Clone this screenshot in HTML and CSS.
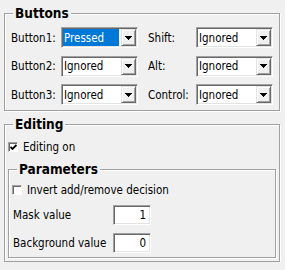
FILE: index.html
```html
<!DOCTYPE html>
<html lang="en">
<head>
    <meta charset="UTF-8">
    <title>Mouse Settings</title>
    <link rel="stylesheet" href="styles.css">
</head>
<body>
    <fieldset class="group">
        <legend>Buttons</legend>
        <div class="button-grid">
            <span class="label">Button1:</span>
            <div class="combo pressed"><span class="combo-text">Pressed</span><span class="combo-btn"><svg width="7" height="4" viewBox="0 0 7 4"><polygon points="0,0 7,0 3.5,4" shape-rendering="crispEdges"/></svg></span></div>
            <span class="label label-right">Shift:</span>
            <div class="combo"><span class="combo-text">Ignored</span><span class="combo-btn"><svg width="7" height="4" viewBox="0 0 7 4"><polygon points="0,0 7,0 3.5,4" shape-rendering="crispEdges"/></svg></span></div>

            <span class="label">Button2:</span>
            <div class="combo"><span class="combo-text">Ignored</span><span class="combo-btn"><svg width="7" height="4" viewBox="0 0 7 4"><polygon points="0,0 7,0 3.5,4" shape-rendering="crispEdges"/></svg></span></div>
            <span class="label label-right">Alt:</span>
            <div class="combo"><span class="combo-text">Ignored</span><span class="combo-btn"><svg width="7" height="4" viewBox="0 0 7 4"><polygon points="0,0 7,0 3.5,4" shape-rendering="crispEdges"/></svg></span></div>

            <span class="label">Button3:</span>
            <div class="combo"><span class="combo-text">Ignored</span><span class="combo-btn"><svg width="7" height="4" viewBox="0 0 7 4"><polygon points="0,0 7,0 3.5,4" shape-rendering="crispEdges"/></svg></span></div>
            <span class="label label-right">Control:</span>
            <div class="combo"><span class="combo-text">Ignored</span><span class="combo-btn"><svg width="7" height="4" viewBox="0 0 7 4"><polygon points="0,0 7,0 3.5,4" shape-rendering="crispEdges"/></svg></span></div>
        </div>
    </fieldset>

    <fieldset class="group editing">
        <legend>Editing</legend>
        <div class="check-row editing-row">
            <span class="checkbox checked"><svg width="7" height="7" viewBox="0 0 7 7"><polyline points="0.5,3 2.5,5 6.5,1" fill="none" stroke="#000" stroke-width="1.8"/></svg></span>
            <span>Editing on</span>
        </div>

        <fieldset class="group params">
            <legend>Parameters</legend>
            <div class="check-row invert-row">
                <span class="checkbox"></span>
                <span>Invert add/remove decision</span>
            </div>
            <div class="value-grid">
                <span class="label">Mask value</span>
                <div class="field">1</div>
                <span class="label">Background value</span>
                <div class="field">0</div>
            </div>
        </fieldset>
    </fieldset>
</body>
</html>
```

FILE: styles.css
```css
* {
    box-sizing: border-box;
}

body {
    margin: 0;
    padding: 5px 5px 0 4px;
    background: #f0f0f0;
    font-family: "DejaVu Sans Condensed", "DejaVu Sans", sans-serif;
    font-size: 11.5px;
    color: #000;
}

/* etched group box */
.group {
    margin: 0;
    padding: 0;
    min-width: 0;
    border: 1px solid #a0a0a0;
    box-shadow: inset 1px 1px #fff, 1px 1px #fff;
}

.group legend {
    margin-left: 8px;
    padding: 0 2px;
    font-size: 13.5px;
    font-weight: bold;
    line-height: 16px;
    background: #f0f0f0;
}

.button-grid {
    display: grid;
    grid-template-columns: 50px 77px 58px 77px;
    row-gap: 7.5px;
    align-items: center;
    padding: 6px 0 5px 6px;
}

.label-right {
    padding-left: 10px;
}

.combo {
    display: flex;
    height: 21px;
    background: #fff;
    border: 1px solid;
    border-color: #a0a0a0 #fff #fff #a0a0a0;
    box-shadow: inset 1px 1px #696969, inset -1px -1px #e3e3e3;
    padding: 1px;
}

.combo-text {
    flex: 1;
    display: flex;
    align-items: center;
    padding-left: 1px;
    margin-right: 2px;
}

.combo.pressed .combo-text {
    background: #0078d7;
    color: #fff;
}

.combo-btn {
    width: 15px;
    display: flex;
    align-items: center;
    justify-content: center;
    background: #f0f0f0;
    border: 1px solid;
    border-color: #e3e3e3 #696969 #696969 #e3e3e3;
    box-shadow: inset 1px 1px #fff, inset -1px -1px #a0a0a0;
}

.combo-btn svg {
    display: block;
}

.editing {
    margin-top: 5px;
    padding-bottom: 3px;
}

.check-row {
    display: flex;
    align-items: center;
    height: 16px;
}

.editing-row {
    margin-top: 7px;
    padding-left: 3px;
}

.checkbox {
    width: 10px;
    height: 10px;
    margin-right: 5px;
    display: flex;
    align-items: center;
    justify-content: center;
    background: #fff;
    border: 1px solid;
    border-color: #a0a0a0 #fff #fff #a0a0a0;
    box-shadow: inset 1px 1px #696969;
}

.checkbox svg {
    display: block;
    margin: 1px 0 0 1px;
}

.params {
    margin: 6px 3px 0 3px;
}

.invert-row {
    margin-top: 5px;
    padding-left: 3px;
}

.value-grid {
    display: grid;
    grid-template-columns: 100px 38px;
    row-gap: 8px;
    align-items: center;
    padding: 7px 0 4px 4px;
}

.field {
    height: 20px;
    line-height: 16px;
    text-align: right;
    padding: 1px 4px 0 0;
    background: #fff;
    border: 1px solid;
    border-color: #a0a0a0 #fff #fff #a0a0a0;
    box-shadow: inset 1px 1px #696969, inset -1px -1px #e3e3e3;
}
```
